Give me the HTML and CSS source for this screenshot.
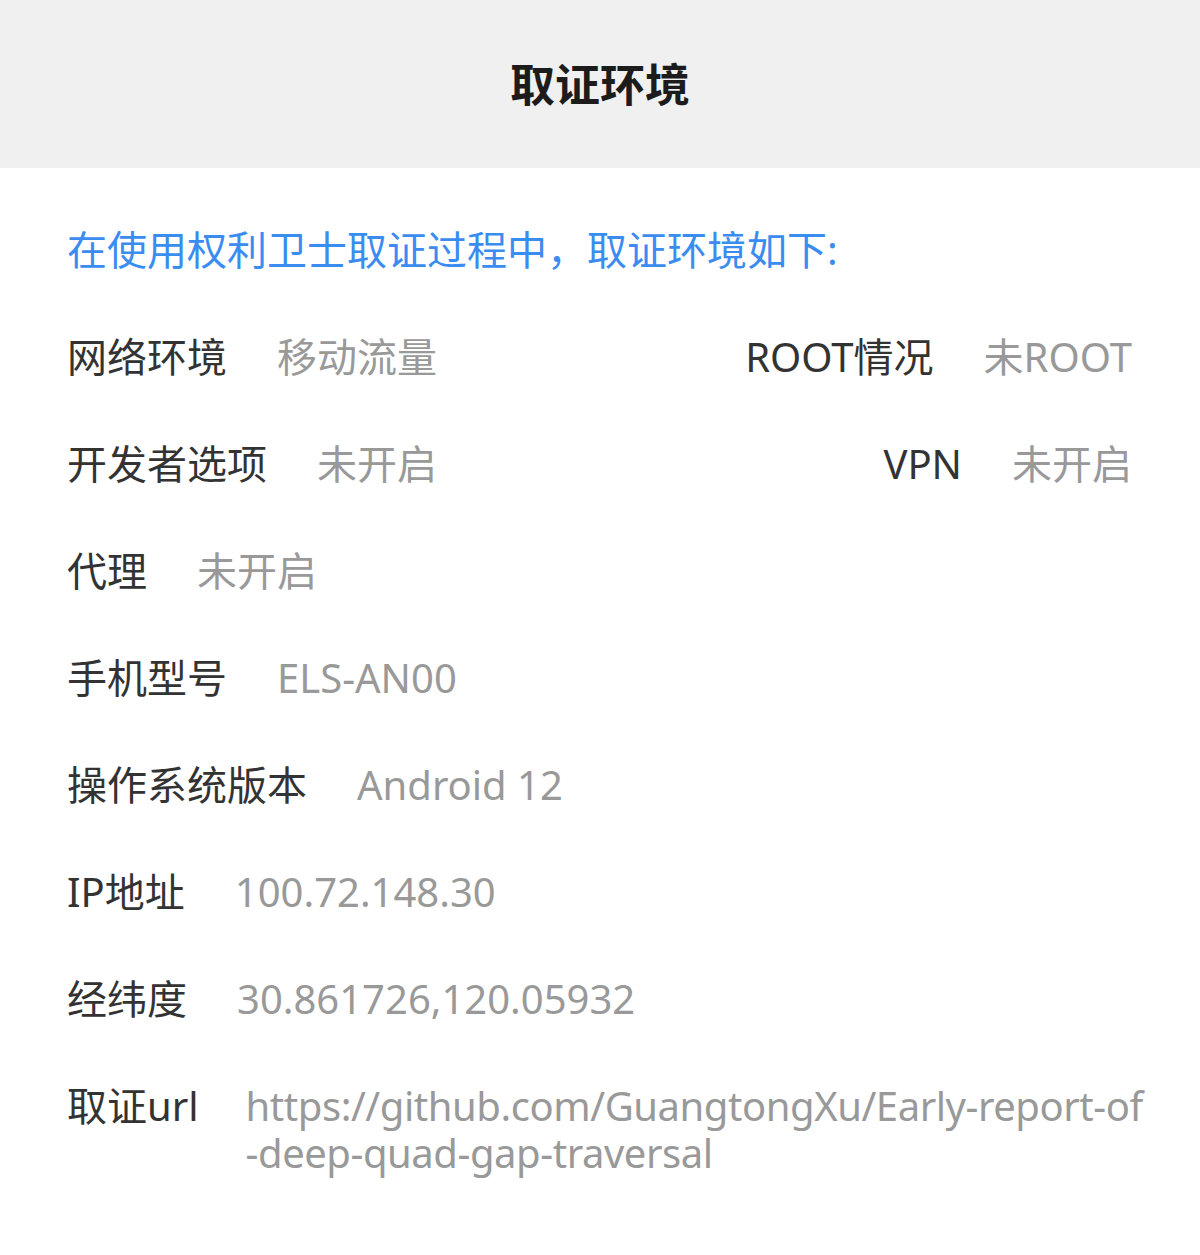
FILE: index.html
```html
<!DOCTYPE html>
<html lang="zh-CN">
<head>
<meta charset="utf-8">
<title>取证环境</title>
<link rel="stylesheet" href="styles.css">
</head>
<body>
<header class="topbar"><h1 class="title">取证环境</h1></header>
<main class="content">
  <p class="intro">在使用权利卫士取证过程中，取证环境如下:</p>
  <div class="row">
    <div class="pair"><span class="label">网络环境</span><span class="value">移动流量</span></div>
    <div class="pair"><span class="label">ROOT情况</span><span class="value">未ROOT</span></div>
  </div>
  <div class="row">
    <div class="pair"><span class="label">开发者选项</span><span class="value">未开启</span></div>
    <div class="pair"><span class="label">VPN</span><span class="value">未开启</span></div>
  </div>
  <div class="row">
    <div class="pair"><span class="label">代理</span><span class="value">未开启</span></div>
  </div>
  <div class="row">
    <div class="pair"><span class="label">手机型号</span><span class="value">ELS-AN00</span></div>
  </div>
  <div class="row">
    <div class="pair"><span class="label">操作系统版本</span><span class="value">Android 12</span></div>
  </div>
  <div class="row">
    <div class="pair"><span class="label">IP地址</span><span class="value">100.72.148.30</span></div>
  </div>
  <div class="row">
    <div class="pair"><span class="label">经纬度</span><span class="value">30.861726,120.05932</span></div>
  </div>
  <div class="row">
    <div class="pair top url-pair"><span class="label">取证url</span><span class="value url"><span class="line">https://github.com/GuangtongXu/Early-report-of</span><span class="line">-deep-quad-gap-traversal</span></span></div>
  </div>
</main>
</body>
</html>
```
FILE: styles.css
```css
html, body {
  margin: 0;
  padding: 0;
  background: #ffffff;
}
body {
  width: 1200px;
  height: 1255px;
  overflow: hidden;
  font-family: "Noto Sans", "Noto Sans CJK SC", sans-serif;
}
.topbar {
  height: 168px;
  background: #f0f0f0;
  display: flex;
  align-items: center;
  justify-content: center;
}
.title {
  margin: 0;
  font-size: 45px;
  font-weight: 700;
  color: #1c1c1c;
  line-height: 1;
}
.content {
  padding: 28px 68px 0 67px;
}
.intro {
  margin: 0;
  padding: 30px 0;
  line-height: 47px;
  font-size: 40px;
  color: #3b8cf0;
}
.row {
  display: flex;
  justify-content: space-between;
  padding: 30px 0;
  line-height: 47px;
  font-size: 40px;
}
.pair {
  display: flex;
  align-items: center;
  gap: 50px;
}
.pair.top {
  align-items: flex-start;
}
.url-pair {
  gap: 47px;
}
.label {
  color: #333333;
  white-space: nowrap;
}
.value {
  color: #999999;
  white-space: nowrap;
}
.url {
  display: flex;
  flex-direction: column;
  letter-spacing: -0.45px;
}
.line {
  display: block;
}
```
